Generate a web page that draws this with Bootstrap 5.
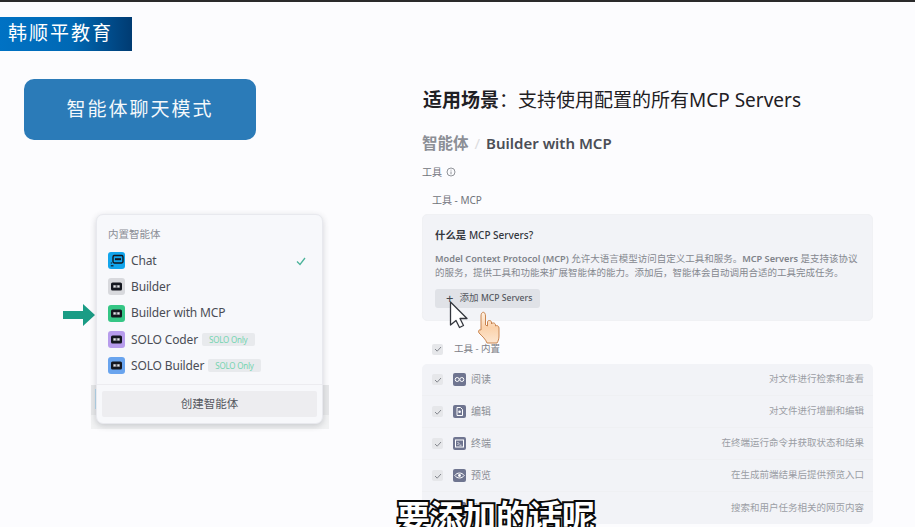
<!DOCTYPE html>
<html lang="zh">
<head>
<meta charset="utf-8">
<link href="https://cdn.jsdelivr.net/npm/bootstrap@5.3.0/dist/css/bootstrap.min.css" rel="stylesheet">
<style>
html,body{height:527px;overflow:hidden}
body{background:#fcfcfe;font-family:"Noto Sans","Noto Sans CJK SC",sans-serif;color:#33363d}
.slide{position:relative;width:915px;height:527px;overflow:hidden;border-top:2px solid #2a2a2a}
.left-col{width:422px;flex:none}
.right-col{width:451px;flex:none}
.brand-bar{width:132px;height:34px;margin-top:15px;padding-left:8px;background:linear-gradient(90deg,#0072c4 0%,#0068b4 55%,#003b72 100%);color:#fff;font-size:19px;letter-spacing:2px;line-height:32px}
.mode-box{width:232px;height:61px;margin:28px 0 0 24px;background:#2b7bb8;border-radius:10px;color:#f4f8fb;font-size:19px;letter-spacing:2px}
.menu-wrap{position:relative;margin:74px 0 0 96px;width:227px}
.menu-backdrop{position:absolute;left:-5px;right:-6px;top:171px;height:44px;background:linear-gradient(180deg,#e7e8ea 0 30px,#f1f2f3 30px)}
.menu-sliver{position:absolute;left:-1px;top:175px;width:1px;height:20px;background:#b5d8ec}
.agent-menu{position:relative;height:210px;background:#f7f8fb;border:1px solid #e8e9ee;border-radius:7px;box-shadow:0 2px 6px rgba(40,45,60,.2);padding:11px 0 0}
.menu-label{font-size:10.5px;color:#8b8e96;padding-left:11px;line-height:16px;margin-bottom:5.5px}
.agent-row{height:26.3px;padding-left:11px;font-size:12px;letter-spacing:-.15px;color:#4a4d55}
.bot{margin-right:6px;flex:none}
.solo-tag{margin-left:4px;background:#e8eaed;color:#74d4b0;font-size:8px;letter-spacing:-.2px;line-height:13px;padding:0 7px;border-radius:2px}
.menu-sep{border-top:1px solid #ececf0;margin-top:5px}
.create-btn{margin:6px 5px 0;width:215px;height:26px;background:#ededf0;border:0;border-radius:2px;font-size:11.5px;color:#55585f;padding:0}
.pointer-arrow{position:absolute;left:-34px;top:90px}
.scene-title{font-size:19px;line-height:26px;margin:85px 0 0 1px;color:#1f2024;font-weight:400}
.crumbs{font-size:15px;font-weight:600;line-height:22px;margin-top:19px;color:#4b4e56}
.crumbs span{color:#8c8f96;font-weight:700;font-size:15.5px}
.crumbs em{color:#dcdde0;font-style:normal;font-weight:400;margin:0 6px}
.tool-label{font-size:10px;color:#70737b;line-height:14px;margin-top:11px}
.tool-sub{font-size:10px;color:#70737b;line-height:14px;margin:14px 0 0 10px}
.info-panel{height:107px;margin-top:7px;background:#f2f3f7;border-radius:5px;padding:12px 12px 0;border:1px solid #f0f1f4}
.info-panel h6{font-size:10.4px;font-weight:700;color:#33363d;line-height:16px;margin:0 0 9px}
.info-panel h6 span{font-size:10px;font-weight:500}
.info-panel p{font-size:9.5px;line-height:14px;color:#85888f;margin:0 0 9px;white-space:nowrap}
.info-panel p b{font-weight:600;color:#80838a;font-size:9.2px}
.add-btn{width:105px;height:19px;background:#e0e2e7;border:0;border-radius:3px;font-size:9.5px;color:#55585f;padding:0 0 0 11px}
.add-btn b{font-weight:500;font-size:8.6px}
.add-btn span{font-size:13px;margin-right:6px;color:#44474e;line-height:1}
.check{width:11px;height:11px;background:#e6e7ea;border-radius:2px;flex:none}
.builtin-row{margin:21px 0 0 10px;font-size:9.5px;color:#7c7f87;line-height:14px;gap:11px}
.tool-list{margin-top:8px;background:#f2f3f7;border-radius:5px;height:160px}
.tool-item{height:32px;padding:0 9px 0 10px;border-bottom:1px solid #eff0f3;font-size:10px;color:#8c8f96}
.tool-item:last-child{border-bottom:0}
.tool-icon{width:13px;height:13px;background:#6f7590;border-radius:2px;margin:0 5px 0 10px;flex:none}
.tool-desc{margin-left:auto;font-size:9.5px;color:#9b9ea5}
.cursors{position:absolute;left:448px;top:296px}
.caption{position:absolute;left:396px;top:492px;width:200px;text-align:center;font-size:33px;font-weight:700;line-height:42px;color:#fff;-webkit-text-stroke:4px #0a0a0a;paint-order:stroke fill;white-space:nowrap;font-family:"Noto Sans CJK SC",sans-serif}
</style>
</head>
<body>
<svg width="0" height="0" class="d-none">
  <symbol id="botface" viewBox="0 0 17 17"><rect x="3" y="4.5" width="11" height="8" rx="1.6" fill="#14171f"/><rect x="5" y="7" width="7" height="3" fill="#d9dbe0" opacity=".35"/><rect x="5.6" y="7.4" width="2" height="2" fill="#e6e8ec"/><rect x="9.4" y="7.4" width="2" height="2" fill="#e6e8ec"/></symbol>
  <symbol id="chatface" viewBox="0 0 17 17"><rect x="5" y="3.5" width="10" height="7.5" rx="1.4" fill="none" stroke="#14171f" stroke-width="1.4"/><rect x="7" y="6.2" width="6" height="2" fill="#14171f"/><path d="M2.8 13.8H5.5" stroke="#14171f" stroke-width="1.2"/><path d="M3.4 10.5V11.5" stroke="#14171f" stroke-width="1.2"/></symbol>
  <symbol id="tick" viewBox="0 0 8 8"><path d="M1 4 3.2 6.2 7 2" fill="none" stroke="#85888f" stroke-width="1"/></symbol>
</svg>
<div class="slide d-flex">
  <div class="left-col">
    <div class="brand-bar">韩顺平教育</div>
    <div class="mode-box d-flex align-items-center justify-content-center">智能体聊天模式</div>
    <div class="menu-wrap">
      <div class="menu-backdrop"></div>
      <div class="menu-sliver"></div>
      <svg class="pointer-arrow" width="34" height="22" viewBox="0 0 34 22"><path d="M1 7H21V0L33 11 21 22V15H1Z" fill="#1a9c85"/></svg>
      <div class="agent-menu">
        <div class="menu-label">内置智能体</div>
        <div class="agent-row d-flex align-items-center"><svg class="bot" width="17" height="17"><rect width="17" height="17" rx="3" fill="#12a5ec"/><use href="#chatface" width="17" height="17"/></svg>Chat<svg class="ms-auto me-3" width="10" height="10" viewBox="0 0 10 10"><path d="M1 5.5 4 8.5 9 2" fill="none" stroke="#4bb39a" stroke-width="1.3"/></svg></div>
        <div class="agent-row d-flex align-items-center"><svg class="bot" width="17" height="17"><rect width="17" height="17" rx="3" fill="#d8d9dd"/><use href="#botface" width="17" height="17"/></svg>Builder</div>
        <div class="agent-row d-flex align-items-center"><svg class="bot" width="17" height="17"><rect width="17" height="17" rx="3" fill="#35c685"/><use href="#botface" width="17" height="17"/></svg>Builder with MCP</div>
        <div class="agent-row d-flex align-items-center"><svg class="bot" width="17" height="17"><rect width="17" height="17" rx="3" fill="#b79cec"/><use href="#botface" width="17" height="17"/></svg>SOLO Coder<span class="solo-tag">SOLO Only</span></div>
        <div class="agent-row d-flex align-items-center"><svg class="bot" width="17" height="17"><rect width="17" height="17" rx="3" fill="#69a4ee"/><use href="#botface" width="17" height="17"/></svg>SOLO Builder<span class="solo-tag">SOLO Only</span></div>
        <div class="menu-sep"></div>
        <button class="create-btn d-block">创建智能体</button>
      </div>
    </div>
  </div>
  <div class="right-col">
    <div class="scene-title"><b>适用场景</b>：支持使用配置的所有MCP Servers</div>
    <div class="crumbs"><span>智能体</span><em>/</em>Builder with MCP</div>
    <div class="tool-label d-flex align-items-center gap-1">工具 <svg width="10" height="10" viewBox="0 0 10 10"><circle cx="5" cy="5" r="4" fill="none" stroke="#85888f" stroke-width=".9"/><path d="M5 4.5V7.3M5 2.7V3.6" stroke="#85888f" stroke-width=".9"/></svg></div>
    <div class="tool-sub">工具 - MCP</div>
    <div class="info-panel">
      <h6>什么是 <span>MCP Servers?</span></h6>
      <p><b>Model Context Protocol (MCP)</b> 允许大语言模型访问自定义工具和服务。<b>MCP Servers</b> 是支持该协议<br>的服务，提供工具和功能来扩展智能体的能力。添加后，智能体会自动调用合适的工具完成任务。</p>
      <button class="add-btn d-flex align-items-center"><span>+</span>添加&nbsp;<b>MCP Servers</b></button>
    </div>
    <div class="builtin-row d-flex align-items-center"><span class="check d-flex align-items-center justify-content-center"><svg width="8" height="8"><use href="#tick" width="8" height="8"/></svg></span>工具 - 内置</div>
    <div class="tool-list">
      <div class="tool-item d-flex align-items-center"><span class="check d-flex align-items-center justify-content-center"><svg width="8" height="8"><use href="#tick" width="8" height="8"/></svg></span><span class="tool-icon d-flex align-items-center justify-content-center"><svg width="11" height="11" viewBox="0 0 11 11"><circle cx="3.2" cy="5.5" r="2" fill="none" stroke="#fff"/><circle cx="7.8" cy="5.5" r="2" fill="none" stroke="#fff"/></svg></span>阅读<span class="tool-desc">对文件进行检索和查看</span></div>
      <div class="tool-item d-flex align-items-center"><span class="check d-flex align-items-center justify-content-center"><svg width="8" height="8"><use href="#tick" width="8" height="8"/></svg></span><span class="tool-icon d-flex align-items-center justify-content-center"><svg width="11" height="11" viewBox="0 0 11 11"><path d="M3 1.5H6.5L8.5 3.5V9.5H3Z" fill="none" stroke="#fff"/><circle cx="5.6" cy="5.8" r="1.3" fill="#fff"/></svg></span>编辑<span class="tool-desc">对文件进行增删和编辑</span></div>
      <div class="tool-item d-flex align-items-center"><span class="check d-flex align-items-center justify-content-center"><svg width="8" height="8"><use href="#tick" width="8" height="8"/></svg></span><span class="tool-icon d-flex align-items-center justify-content-center"><svg width="11" height="11" viewBox="0 0 11 11"><rect x="1.5" y="2" width="8" height="7" fill="none" stroke="#fff"/><path d="M3.5 4 5 5.5 3.5 7M5.5 7.2H7.5" fill="none" stroke="#fff" stroke-width=".8"/></svg></span>终端<span class="tool-desc">在终端运行命令并获取状态和结果</span></div>
      <div class="tool-item d-flex align-items-center"><span class="check d-flex align-items-center justify-content-center"><svg width="8" height="8"><use href="#tick" width="8" height="8"/></svg></span><span class="tool-icon d-flex align-items-center justify-content-center"><svg width="11" height="11" viewBox="0 0 11 11"><path d="M.8 5.5C3 2.2 8 2.2 10.2 5.5 8 8.8 3 8.8.8 5.5Z" fill="none" stroke="#fff"/><circle cx="5.5" cy="5.5" r="1.4" fill="#fff"/></svg></span>预览<span class="tool-desc">在生成前端结果后提供预览入口</span></div>
      <div class="tool-item d-flex align-items-center"><span class="check d-flex align-items-center justify-content-center"><svg width="8" height="8"><use href="#tick" width="8" height="8"/></svg></span><span class="tool-icon"></span>联网<span class="tool-desc">搜索和用户任务相关的网页内容</span></div>
    </div>
  </div>
  <svg class="cursors" width="56" height="48" viewBox="0 0 56 48">
    <path d="M2.5 4 2.5 27 8 22.5 11.5 29.5 15.5 27.5 12 20.5 19 20.5Z" fill="#fff" stroke="#33363d" stroke-width="1.3" stroke-linejoin="round"/>
    <defs><linearGradient id="handfill" x1="0" y1="0" x2="0" y2="1"><stop offset="0" stop-color="#fff1e3"/><stop offset=".5" stop-color="#fbd2ab"/><stop offset="1" stop-color="#fde6d0"/></linearGradient></defs>
    <path d="M33 18C33 13 37.5 13 37.5 18V27L39.5 28V24C39.5 22 43 22 43.5 24V26C44.5 24 47.5 25 47.5 27V28C49 27 51 28 51 30V38C51 41 50 43.5 49 45H39C37.5 41 34.5 38.5 32 36 29.5 34 30.5 31 33 32Z" fill="url(#handfill)" stroke="#c98550" stroke-width="1"/>
  </svg>
  <div class="caption">要添加的话呢</div>
</div>
</body>
</html>
